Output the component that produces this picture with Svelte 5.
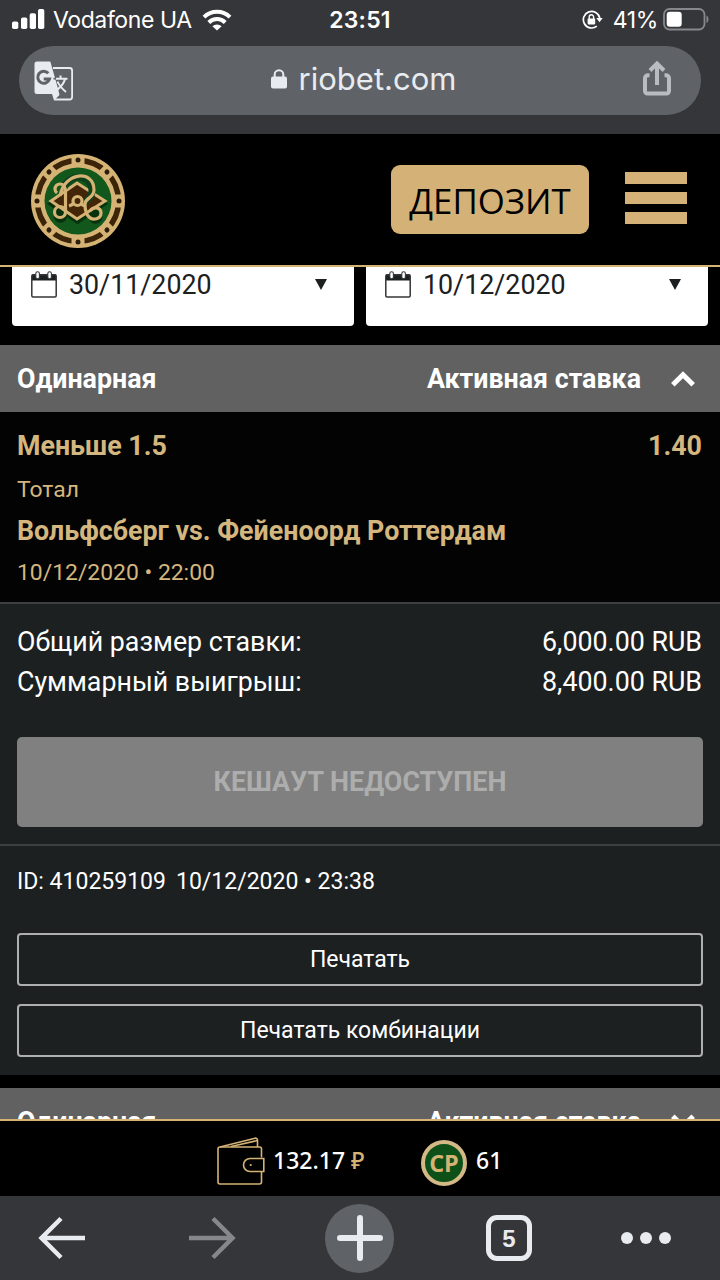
<script>
  const dates = ['30/11/2020', '10/12/2020'];
  const totals = [
    ['Общий размер ставки:', '6,000.00 RUB'],
    ['Суммарный выигрыш:', '8,400.00 RUB']
  ];
  const studs = [0, 45, 90, 135, 180, 225, 270, 315];
</script>

<div class="screen">
  <div class="status">
    <div class="carrier">
      <svg width="33" height="21" viewBox="0 0 33 21" fill="#fff">
        <rect x="0" y="12.5" width="6.3" height="7.5" rx="1.8" />
        <rect x="9" y="8.5" width="6.3" height="11.5" rx="1.8" />
        <rect x="17.7" y="4.3" width="6.3" height="15.7" rx="1.8" />
        <rect x="26" y="0" width="6.3" height="20" rx="1.8" />
      </svg>
      <span class="operator">Vodafone UA</span>
      <svg class="wifi" width="30" height="22" viewBox="0 0 30 22" fill="none" stroke="#fff" stroke-width="4">
        <path d="M2 8.1a18.5 18.5 0 0 1 26 0" />
        <path d="M6.800 13.500a11.600 11.600 0 0 1 16.400 0" />
        <path d="M15 21.500l-4.600-4.200a6.500 6.500 0 0 1 9.200 0z" fill="#fff" stroke="none" />
      </svg>
    </div>
    <span class="clock">23:51</span>
    <div class="power">
      <svg width="21" height="20" viewBox="0 0 21 20">
        <path d="M14.8 16.2A8.3 8.3 0 1 1 17.8 8" fill="none" stroke="#fff" stroke-width="1.7" />
        <path d="M14.3 8h6.4l-3.2 4.3z" fill="#fff" />
        <rect x="5.6" y="8.6" width="7.6" height="5.8" rx=".8" fill="#fff" />
        <path d="M7.2 9V7a2.2 2.2 0 0 1 4.4 0v2" fill="none" stroke="#fff" stroke-width="1.4" />
      </svg>
      <span class="percent">41%</span>
      <svg class="battery" width="47" height="23" viewBox="0 0 47 23">
        <rect x="1" y="1" width="40.5" height="20.5" rx="5.5" fill="none" stroke="#87888b" stroke-width="1.8" />
        <rect x="3.7" y="3.7" width="15" height="15" rx="3" fill="#fff" />
        <path d="M43.5 7.5c2.6 1 2.6 6.5 0 7.5z" fill="#87888b" />
      </svg>
    </div>
  </div>

  <div class="browser">
    <div class="address">
      <svg class="translate" width="40" height="40" viewBox="0 0 40 40">
        <path d="M19 7h16.600a2.500 2.500 0 0 1 2.500 2.500V36a2.500 2.500 0 0 1-2.500 2.500H20.300" fill="none" stroke="#e8ebef" stroke-width="1.800" />
        <path d="M3 .5h13.300L24 27.500l1.500 6.500-5.500 5.500-2-6.500H3a2.500 2.500 0 0 1-2.500-2.500V3A2.500 2.500 0 0 1 3 .5z" fill="#e8ebef" />
        <path d="M14.300 12.300a6 6 0 1 0 1.200 5.700H9.700" fill="none" stroke="#5f6367" stroke-width="3" />
        <path d="M22 17.700H33.500M26.500 14.500v3M31 18c-1 4.700-4.500 8-7.500 10.500M23.500 20.500c1.800 4.500 5 7.500 8.500 10.500" fill="none" stroke="#e8ebef" stroke-width="2" />
        <path d="M19.500 17.700h2.200" stroke="#5f6367" stroke-width="1.700" />
      </svg>
      <div class="site">
        <svg width="16" height="20" viewBox="0 0 16 20">
          <rect x="0" y="7.500" width="16" height="12" rx="2" fill="#e8ebef" />
          <path d="M3.700 9V5.500a4.300 4.300 0 0 1 8.600 0V9" fill="none" stroke="#e8ebef" stroke-width="2" />
        </svg>
        <span>riobet.com</span>
      </div>
      <svg class="share" width="28" height="36" viewBox="0 0 28 36" fill="none" stroke="#b9bdc1" stroke-width="4">
        <path d="M6.500 14.200H5a3 3 0 0 0-3 3V30a2.500 2.500 0 0 0 2.500 2.500h19A2.500 2.500 0 0 0 26 30V17.200a3 3 0 0 0-3-3h-1.500" />
        <path d="M14 24V3" />
        <path d="M7 9.500L14 2.500l7 7" />
      </svg>
    </div>
  </div>

  <header>
    <svg class="logo" width="94" height="94" viewBox="-47 -47 94 94">
      <circle r="47" fill="#d4b374" />
      <circle r="40.500" fill="none" stroke="#3c2409" stroke-width="5.500" />
      {#each studs as angle}
        <g transform="rotate({angle})">
          <rect x="-6.500" y="-45" width="13" height="9" fill="#d4b374" />
          <circle cy="-41" r="2.500" fill="#2c1c0b" />
        </g>
      {/each}
      <circle r="33.500" fill="#12571c" />
      <g transform="translate(-.5 2.800)" fill="#08310d" stroke="#08310d" stroke-width="4">
        <path d="M-27 0L0-18 27 0 0 18z" />
        <circle cx="-17" cy="12" r="5" />
        <circle cx="18" cy="13" r="5" />
      </g>
      <path d="M-27 0L-1-18 27 0-1 18z" fill="#432608" stroke="#d4b374" stroke-width="3" />
      <path d="M-14-13C-10-28 14-27 14-11 14-4 10-1 6 2" fill="none" stroke="#10401a" stroke-width="7" />
      <g fill="none" stroke="#d4b374" stroke-width="3.200">
        <path d="M-21-8a5 5 0 1 1 7-7c2 3 1.500 5 1.500 8V11a5.500 5.500 0 1 1-5.500-5.500c2 0 3.500 1 5 2.500" />
        <path d="M-18-5C-14-29 16-32 16-11 16-3 7-3 7 3c0 6 1 10 4 13 4 4 12 2 12-4 0-6-8-7-11-2" />
        <circle cx="-.5" r="4.500" fill="#432608" />
        <path d="M-9 5c3-1 4-2 5-3M3 3l4 2" />
      </g>
    </svg>
    <button class="deposit">ДЕПОЗИТ</button>
    <div class="burger"><i></i><i></i><i></i></div>
  </header>

  <main>
    <div class="dates">
      {#each dates as date}
        <div class="date">
          <svg width="26" height="27" viewBox="0 0 26 27">
            <path d="M1 3.500h24v6H1z" fill="#1c2021" />
            <rect x=".8" y="3.800" width="24.400" height="22.200" rx="1.200" fill="none" stroke="#333637" stroke-width="1.500" />
            <rect x="4.800" y=".7" width="3.600" height="7" rx="1.800" fill="#fff" stroke="#333637" stroke-width="1.100" />
            <rect x="16.800" y=".7" width="3.600" height="7" rx="1.800" fill="#fff" stroke="#333637" stroke-width="1.100" />
          </svg>
          <span>{date}</span>
          <svg class="caret" width="12" height="11" viewBox="0 0 12 11"><path d="M0 0h12L6 11z" fill="#1c2021" /></svg>
        </div>
      {/each}
    </div>

    <section>
      <div class="bet-head">
        <b>Одинарная</b><b class="state">Активная ставка</b>
        <svg width="24" height="16" viewBox="0 0 24 16" fill="none" stroke="#fff" stroke-width="5"><path d="M1.800 13.800L12 3.700l10.200 10.100" /></svg>
      </div>
      <div class="selection">
        <div class="pick"><b>Меньше 1.5</b><b>1.40</b></div>
        <div class="market">Тотал</div>
        <b class="event">Вольфсберг vs. Фейеноорд Роттердам</b>
        <div class="when">10/12/2020 • 22:00</div>
      </div>
      <div class="stake">
        {#each totals as [label, value]}
          <div class="total"><span>{label}</span><span class="value">{value}</span></div>
        {/each}
        <button class="cashout">КЕШАУТ НЕДОСТУПЕН</button>
      </div>
      <div class="ticket">
        <div class="id"><span>ID: 410259109</span><span>10/12/2020 • 23:38</span></div>
        <button>Печатать</button>
        <button>Печатать комбинации</button>
      </div>
    </section>

    <section>
      <div class="bet-head">
        <b>Одинарная</b><b class="state">Активная ставка</b>
        <svg width="24" height="16" viewBox="0 0 24 16" fill="none" stroke="#fff" stroke-width="5"><path d="M1.800 2.200L12 12.300 22.200 2.200" /></svg>
      </div>
    </section>
  </main>

  <div class="balance">
    <svg class="wallet" width="48" height="48" viewBox="0 0 48 48" fill="none" stroke="#d4b374" stroke-width="1.600">
      <path d="M44.500 20.500V12a2 2 0 0 0-2-2H3a2 2 0 0 0-2 2v33a2 2 0 0 0 2 2h39.500a2 2 0 0 0 2-2V34.500" />
      <path d="M3 10L38 1.200a2 2 0 0 1 2.500 2V10M14 9.500l26.500-6" />
      <path d="M46.800 21.500v13H33a6.500 6.500 0 0 1 0-13z" />
      <circle cx="33.700" cy="28" r="1.100" fill="#d4b374" stroke="none" />
    </svg>
    <span class="money">132.17 <i>₽</i></span>
    <div class="coin">CP</div>
    <span class="points">61</span>
  </div>

  <nav>
    <svg width="48" height="44" viewBox="0 0 48 44" fill="none" stroke="#e8ebef" stroke-width="4.500"><path d="M23 2.500L3.500 22 23 41.500M4 22h43" /></svg>
    <svg width="48" height="44" viewBox="0 0 48 44" fill="none" stroke="#85878a" stroke-width="4.500"><path d="M25 2.500L44.500 22 25 41.500M44 22H1" /></svg>
    <div class="plus">
      <svg width="46" height="46" viewBox="0 0 46 46" stroke="#e8ebef" stroke-width="6" stroke-linecap="round"><path d="M23 3v40M3 23h40" /></svg>
    </div>
    <div class="tabs">5</div>
    <svg width="50" height="12" viewBox="0 0 50 12" fill="#e8ebef"><circle cx="6" cy="6" r="6" /><circle cx="25" cy="6" r="6" /><circle cx="44" cy="6" r="6" /></svg>
  </nav>
</div>

<style>
  :global(body) { background: #000; }
  .screen { width: 720px; height: 1280px; display: flex; flex-direction: column; overflow: hidden; background: #000; color: #fff; font-family: Roboto, sans-serif; font-size: 26.8px; }
  svg { display: block; flex: none; }
  span, b, button { white-space: nowrap; }
  button { font-family: inherit; margin: 0; padding: 0; display: block; }
  .status { height: 46px; flex: none; background: #35363a; display: grid; grid-template-columns: 1fr auto 1fr; font-family: Inter, sans-serif; line-height: 40px; }
  .carrier { display: flex; height: 40px; padding-left: 12px; }
  .carrier svg { margin-top: 9px; }
  .operator { width: 140px; margin: 0 9px 0 8px; font-size: 23px; letter-spacing: -.4px; }
  .clock { font-size: 23px; font-weight: 600; letter-spacing: .2px; }
  .power { display: flex; justify-content: flex-end; align-items: center; height: 40px; padding-right: 10px; }
  .percent { font-size: 23px; margin: 0 5px 0 10px; letter-spacing: -.4px; }
  .power .battery { width: 47px; margin-top: -2px; }
  .browser { height: 88px; flex: none; background: #35363a; padding: 0 19px; box-sizing: border-box; }
  .address { height: 69px; border-radius: 35px; background: #5f6367; display: flex; align-items: center; justify-content: space-between; padding: 0 30px 0 15px; }
  .site { display: flex; align-items: center; gap: 12px; margin: -3px 0 0 10px; font-family: Inter, sans-serif; font-size: 31px; color: #e8ebef; line-height: 66px; }
  .share { margin-top: -4px; }
  header { height: 131px; flex: none; display: flex; align-items: center; padding: 0 33px 0 31px; border-bottom: 2px solid #d4b374; box-sizing: content-box; }
  .logo { margin-right: auto; margin-top: 2px; }
  .deposit { width: 198px; height: 69px; border: 0; border-radius: 9px; background: #d4b277; color: #000; font: 34.800px/71px "Open Sans", sans-serif; }
  .burger { display: grid; gap: 8px; margin: -3px 0 0 36px; }
  .burger i { width: 62px; height: 12px; background: #d4b277; }
  main { height: 852px; flex: none; overflow: hidden; }
  .dates { display: flex; gap: 12px; padding: 0 12px; margin-bottom: 19px; }
  .date { flex: 1; height: 59px; box-sizing: border-box; background: #fff; color: #1c2021; border-radius: 0 0 4px 4px; display: flex; align-items: center; padding: 0 27px 24px 19px; gap: 12px; }
  .caret { margin-left: auto; }
  .bet-head { height: 67px; background: #616161; display: flex; align-items: center; padding: 0 25px 0 17px; font-size: 26.800px; }
  .state { margin: 0 30px 0 auto; }
  b { font-weight: 700; }
  .selection { height: 190px; box-sizing: border-box; padding: 14px 18px 0 17px; background: #030303; color: #d4b67f; display: flex; flex-direction: column; }
  .pick { display: flex; justify-content: space-between; line-height: 40px; }
  .market { font-size: 22.900px; line-height: 48px; }
  .event { line-height: 34px; }
  .when { font-size: 22.900px; line-height: 50px; }
  .stake { height: 242px; box-sizing: border-box; background: #1c2021; border-top: 2px solid #3d4041; padding: 18px 18px 0 17px; }
  .total { display: flex; justify-content: space-between; line-height: 40px; }
  .cashout { width: 686px; height: 90px; margin: 35px 0 0; border: 0; border-radius: 5px; background: #808080; color: #adadad; font-size: 26.900px; font-weight: 700; }
  .ticket { height: 231px; box-sizing: border-box; background: #1c2021; border-top: 2px solid #3d4041; padding: 16px 17px 0; margin-bottom: 13px; }
  .id { display: flex; gap: 10px; font-size: 23px; line-height: 40px; }
  .ticket button { width: 100%; height: 53px; border: 2px solid #aeb0b0; border-radius: 4px; background: transparent; color: #fff; font-size: 23px; }
  .id + button { margin: 31px 0 18px; }
  .balance { height: 75px; flex: none; border-top: 2px solid #d4b374; display: flex; align-items: center; padding-left: 217px; font: 500 23px "Noto Sans", sans-serif; }
  .wallet { margin-top: 4px; }
  .money { width: 91px; margin: 3px 57px 0 8px; }
  .money i { font-style: normal; color: #d4b374; }
  .coin { width: 46px; height: 46px; box-sizing: border-box; border: 4px solid #d4b886; border-radius: 50%; background: #0d5119; color: #d4b374; text-align: center; font: 700 23.500px/38px "Open Sans", sans-serif; margin-top: 9px; }
  .points { margin: 3px 0 0 9px; }
  nav { flex: 1; background: #35363a; display: grid; grid-template-columns: 150px 137px 161px 135px auto; align-items: center; padding-left: 38px; }
  .plus { width: 69px; height: 69px; border-radius: 50%; background: #5f6367; display: flex; align-items: center; justify-content: center; }
  .tabs { width: 46px; height: 46px; box-sizing: border-box; border: 5px solid #e8ebef; border-radius: 11px; color: #e8ebef; text-align: center; font: 700 24px/37px "Liberation Sans", sans-serif; }
</style>
